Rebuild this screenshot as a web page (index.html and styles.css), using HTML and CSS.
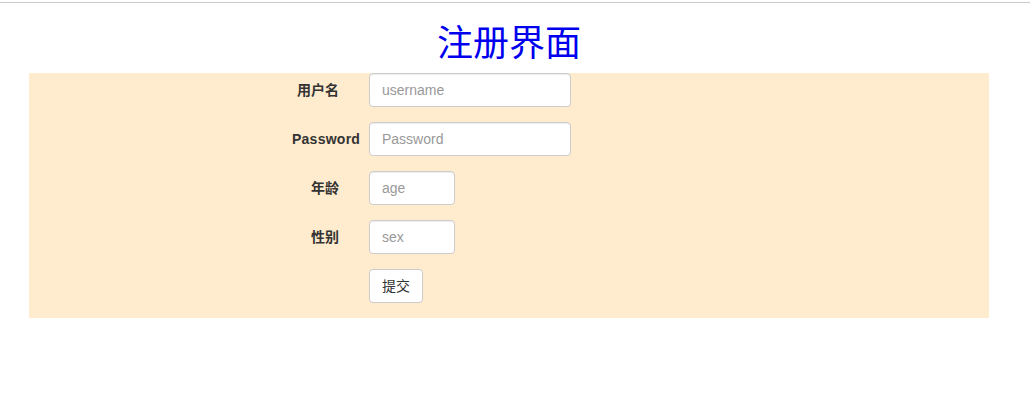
FILE: index.html
```html
<!DOCTYPE html>
<html lang="zh">
<head>
<meta charset="utf-8">
<title>注册界面</title>
<link rel="stylesheet" href="styles.css">
</head>
<body>
<div class="topline"></div>
<div class="container">
  <h1 class="title">注册界面</h1>
  <form class="reg-form">
    <div class="form-group">
      <label class="ctl-label">用户名</label>
      <input class="form-control wide" type="text" placeholder="username">
    </div>
    <div class="form-group">
      <label class="ctl-label latin">Password</label>
      <input class="form-control wide" type="password" placeholder="Password">
    </div>
    <div class="form-group">
      <label class="ctl-label">年龄</label>
      <input class="form-control narrow" type="text" placeholder="age">
    </div>
    <div class="form-group">
      <label class="ctl-label">性别</label>
      <input class="form-control narrow" type="text" placeholder="sex">
    </div>
    <div class="form-group">
      <span class="ctl-label"></span>
      <button class="btn" type="button">提交</button>
    </div>
  </form>
</div>
</body>
</html>
```

FILE: styles.css
```css
* { box-sizing: border-box; }
html, body { margin: 0; padding: 0; background: #fff; }
body {
  font-family: "Liberation Sans", Arial, "Noto Sans CJK SC", sans-serif;
  font-size: 14px;
  line-height: 1.42857;
  color: #333;
}
.topline {
  margin-top: 2px;
  height: 1px;
  background: #c9c9c9;
}
.container {
  width: 960px;
  margin-left: 29px;
}
.title {
  margin: 18px 0 12px;
  font-family: "Noto Sans CJK SC", sans-serif;
  font-size: 36px;
  font-weight: 400;
  line-height: 1.1;
  color: #0000ee;
  text-align: center;
}
.reg-form {
  background: #ffebcd;
  padding-left: 263px;
  margin: 0;
}
.form-group {
  display: flex;
  align-items: flex-start;
  padding-bottom: 15px;
}
.ctl-label {
  width: 47px;
  flex: none;
  margin-right: 30px;
  padding-top: 7px;
  text-align: right;
  font-weight: 700;
  white-space: nowrap;
  line-height: 20px;
  display: block;
}
.ctl-label.latin { letter-spacing: 0.25px; }
.form-control {
  display: block;
  height: 34px;
  padding: 6px 12px;
  font-family: "Liberation Sans", Arial, sans-serif;
  font-size: 14px;
  color: #555;
  background: #fff;
  border: 1px solid #ccc;
  border-radius: 4px;
  box-shadow: inset 0 1px 1px rgba(0,0,0,.075);
  outline: none;
}
.form-control::placeholder { color: #999; }
.wide { width: 202px; }
.narrow { width: 86px; }
.btn {
  height: 34px;
  width: 54px;
  padding: 5px 12px 7px;
  font-family: "Noto Sans CJK SC", sans-serif;
  font-size: 14px;
  line-height: 20px;
  color: #333;
  background: #fff;
  border: 1px solid #ccc;
  border-radius: 4px;
  cursor: pointer;
}
```
